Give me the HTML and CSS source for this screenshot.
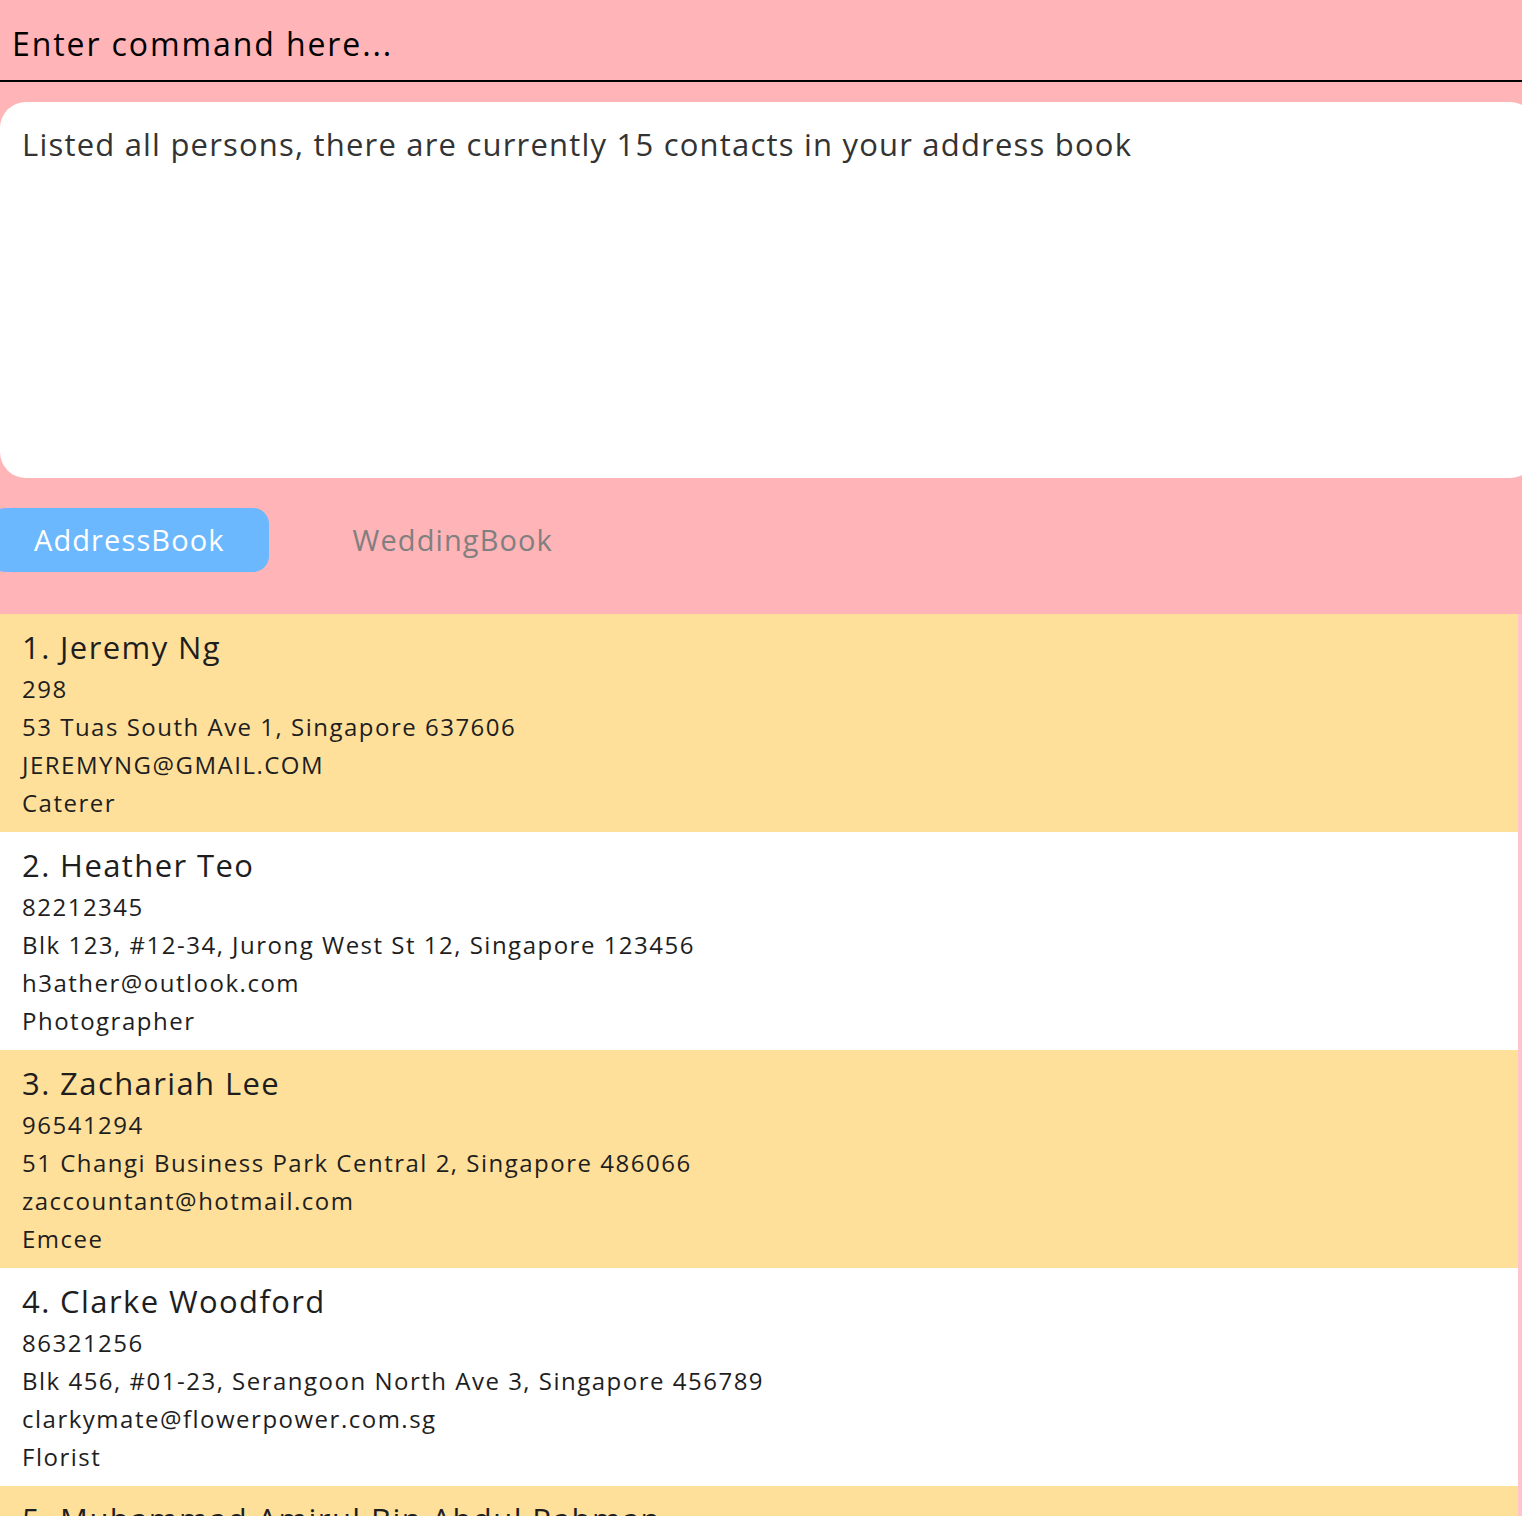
FILE: index.html
```html
<!DOCTYPE html>
<html>
<head>
<meta charset="utf-8">
<link rel="stylesheet" href="styles.css">
</head>
<body>
<div class="app">
  <div class="command">Enter command here...</div>
  <div class="result">Listed all persons, there are currently 15 contacts in your address book</div>
  <div class="tabs">
    <div class="tab active">AddressBook</div>
    <div class="tab">WeddingBook</div>
  </div>
  <div class="list">
    <div class="card odd">
      <div class="name">1. Jeremy Ng</div>
      <div class="line">298</div>
      <div class="line">53 Tuas South Ave 1, Singapore 637606</div>
      <div class="line">JEREMYNG@GMAIL.COM</div>
      <div class="line">Caterer</div>
    </div>
    <div class="card">
      <div class="name">2. Heather Teo</div>
      <div class="line">82212345</div>
      <div class="line">Blk 123, #12-34, Jurong West St 12, Singapore 123456</div>
      <div class="line">h3ather@outlook.com</div>
      <div class="line">Photographer</div>
    </div>
    <div class="card odd">
      <div class="name">3. Zachariah Lee</div>
      <div class="line">96541294</div>
      <div class="line">51 Changi Business Park Central 2, Singapore 486066</div>
      <div class="line">zaccountant@hotmail.com</div>
      <div class="line">Emcee</div>
    </div>
    <div class="card">
      <div class="name">4. Clarke Woodford</div>
      <div class="line">86321256</div>
      <div class="line">Blk 456, #01-23, Serangoon North Ave 3, Singapore 456789</div>
      <div class="line">clarkymate@flowerpower.com.sg</div>
      <div class="line">Florist</div>
    </div>
    <div class="card odd">
      <div class="name">5. Muhammad Amirul Bin Abdul Rahman</div>
      <div class="line">91234567</div>
    </div>
  </div>
</div>
</body>
</html>
```

FILE: styles.css
```css
html, body {
  margin: 0;
  padding: 0;
  background: #ffb4b8;
  overflow: hidden;
  height: 1516px;
}
.app {
  font-family: "Open Sans", "DejaVu Sans", sans-serif;
  display: flex;
  flex-direction: column;
}
.command {
  height: 82px;
  box-sizing: border-box;
  padding: 22px 0 0 12px;
  font-size: 32px;
  line-height: 44px;
  letter-spacing: 1.9px;
  color: #000;
  border-bottom: 2px solid #000;
}
.result {
  margin-top: 20px;
  width: calc(100% + 14px);
  height: 376px;
  box-sizing: border-box;
  background: #fff;
  border-radius: 26px;
  padding: 20px 0 0 22px;
  font-size: 31px;
  line-height: 44px;
  letter-spacing: 1.2px;
  color: #333;
}
.tabs {
  display: flex;
  gap: 40px;
  margin-top: 30px;
  margin-left: -10px;
  height: 64px;
  align-items: stretch;
}
.tab {
  display: flex;
  align-items: center;
  padding: 0 44px 2px;
  font-size: 29px;
  letter-spacing: 1.1px;
  color: #808080;
  border-radius: 16px;
}
.tab.active {
  background: #6bb8fe;
  color: #fff;
}
.list {
  margin-top: 42px;
  border-right: 4px solid #ffc4cc;
  background: #fff;
}
.card {
  height: 218px;
  box-sizing: border-box;
  padding: 10px 0 0 22px;
  background: #fff;
  color: #1e1e1e;
}
.card.odd {
  background: #ffe09b;
}
.name {
  font-size: 31px;
  line-height: 46px;
  letter-spacing: 1.4px;
}
.line {
  font-size: 24px;
  line-height: 38px;
  letter-spacing: 1.5px;
}
```
